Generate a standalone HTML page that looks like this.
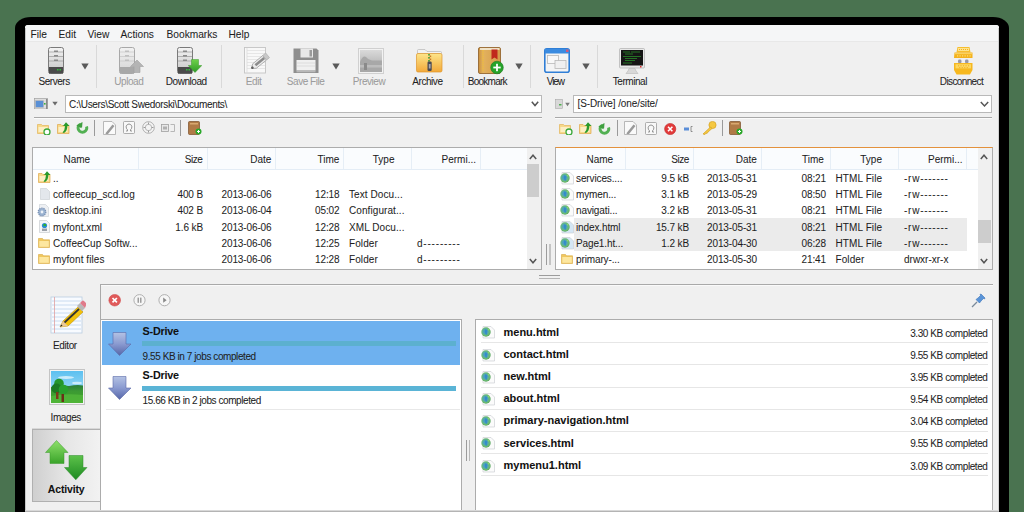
<!DOCTYPE html>
<html><head><meta charset="utf-8">
<style>
*{margin:0;padding:0;box-sizing:border-box}
html,body{width:1024px;height:512px;overflow:hidden;background:#4a7350;font-family:"Liberation Sans",sans-serif;color:#1e1e1e;position:relative}
.a{position:absolute}
.t{position:absolute;white-space:nowrap;-webkit-text-stroke:0.05px currentColor}
</style></head><body>
<div class="a" style="left:15px;top:17px;width:994px;height:520px;background:#000;border-radius:16px/11px"></div>
<div class="a" style="left:25px;top:25px;width:974px;height:500px;background:#f0f0f0;border-radius:3px 3px 0 0"></div>
<div class="a" style="left:25px;top:25px;width:974px;height:16px;background:#f5f6f7;border-radius:3px 3px 0 0"></div>
<div class="a" style="left:25px;top:28px;width:1px;height:490px;background:#c8c8c8"></div>
<div class="a" style="left:998px;top:28px;width:1px;height:490px;background:#d0d0d0"></div>
<div class="a" style="left:26px;top:41px;width:972px;height:1px;background:#e8e8e8"></div>
<div class="t" style="left:30.5px;top:29.87px;font-size:10.2px;line-height:10.2px;letter-spacing:0px;font-weight:normal;color:#1e1e1e;">File</div>
<div class="t" style="left:58.5px;top:29.87px;font-size:10.2px;line-height:10.2px;letter-spacing:0px;font-weight:normal;color:#1e1e1e;">Edit</div>
<div class="t" style="left:87.5px;top:29.87px;font-size:10.2px;line-height:10.2px;letter-spacing:0px;font-weight:normal;color:#1e1e1e;">View</div>
<div class="t" style="left:120.5px;top:29.87px;font-size:10.2px;line-height:10.2px;letter-spacing:0px;font-weight:normal;color:#1e1e1e;">Actions</div>
<div class="t" style="left:166.5px;top:29.87px;font-size:10.2px;line-height:10.2px;letter-spacing:0px;font-weight:normal;color:#1e1e1e;">Bookmarks</div>
<div class="t" style="left:228.5px;top:29.87px;font-size:10.2px;line-height:10.2px;letter-spacing:0px;font-weight:normal;color:#1e1e1e;">Help</div>
<svg class="a" style="left:48px;top:47px" width="16" height="27" viewBox="0 0 16 27"><defs><linearGradient id="sg48" x1="0" y1="0" x2="0" y2="1"><stop offset="0" stop-color="#f4f4f4"/><stop offset="1" stop-color="#c4c4c4"/></linearGradient></defs>
<rect x="0.5" y="0.5" width="15" height="26" rx="2" fill="url(#sg48)" stroke="#7a7a7a"/>
<rect x="1" y="20" width="14" height="6.5" fill="#4a4a4a"/>
<line x1="1" y1="5" x2="15" y2="5" stroke="#8a8a8a" stroke-width="0.6"/>
<line x1="1" y1="9.5" x2="15" y2="9.5" stroke="#8a8a8a" stroke-width="0.6"/>
<line x1="1" y1="14" x2="15" y2="14" stroke="#8a8a8a" stroke-width="0.6"/>
<rect x="6" y="3.5" width="4" height="1.5" fill="#8a8a8a"/>
<rect x="6" y="8" width="4" height="1.5" fill="#8a8a8a"/>
<rect x="6" y="12.5" width="4" height="1.5" fill="#8a8a8a"/>
<rect x="9" y="22" width="1.5" height="1.5" fill="#2fc03a"/><rect x="11.5" y="22" width="1.5" height="1.5" fill="#2fc03a"/></svg>
<svg class="a" style="left:119px;top:47px" width="16" height="27" viewBox="0 0 16 27"><defs><linearGradient id="sg119" x1="0" y1="0" x2="0" y2="1"><stop offset="0" stop-color="#f2f2f2"/><stop offset="1" stop-color="#d4d4d4"/></linearGradient></defs>
<rect x="0.5" y="0.5" width="15" height="26" rx="2" fill="url(#sg119)" stroke="#a8a8a8"/>
<rect x="1" y="20" width="14" height="6.5" fill="#a8a8a8"/>
<line x1="1" y1="5" x2="15" y2="5" stroke="#c0c0c0" stroke-width="0.6"/>
<line x1="1" y1="9.5" x2="15" y2="9.5" stroke="#c0c0c0" stroke-width="0.6"/>
<line x1="1" y1="14" x2="15" y2="14" stroke="#c0c0c0" stroke-width="0.6"/>
<rect x="6" y="3.5" width="4" height="1.5" fill="#c0c0c0"/>
<rect x="6" y="8" width="4" height="1.5" fill="#c0c0c0"/>
<rect x="6" y="12.5" width="4" height="1.5" fill="#c0c0c0"/>
</svg>
<svg class="a" style="left:177px;top:47px" width="16" height="27" viewBox="0 0 16 27"><defs><linearGradient id="sg177" x1="0" y1="0" x2="0" y2="1"><stop offset="0" stop-color="#f4f4f4"/><stop offset="1" stop-color="#c4c4c4"/></linearGradient></defs>
<rect x="0.5" y="0.5" width="15" height="26" rx="2" fill="url(#sg177)" stroke="#7a7a7a"/>
<rect x="1" y="20" width="14" height="6.5" fill="#4a4a4a"/>
<line x1="1" y1="5" x2="15" y2="5" stroke="#8a8a8a" stroke-width="0.6"/>
<line x1="1" y1="9.5" x2="15" y2="9.5" stroke="#8a8a8a" stroke-width="0.6"/>
<line x1="1" y1="14" x2="15" y2="14" stroke="#8a8a8a" stroke-width="0.6"/>
<rect x="6" y="3.5" width="4" height="1.5" fill="#8a8a8a"/>
<rect x="6" y="8" width="4" height="1.5" fill="#8a8a8a"/>
<rect x="6" y="12.5" width="4" height="1.5" fill="#8a8a8a"/>
<rect x="9" y="22" width="1.5" height="1.5" fill="#2fc03a"/><rect x="11.5" y="22" width="1.5" height="1.5" fill="#2fc03a"/></svg>
<svg class="a" style="left:130px;top:59px" width="14" height="14" viewBox="0 0 14 14"><path d="M7 1 L13.5 7.5 L10 7.5 L10 13.5 L4 13.5 L4 7.5 L0.5 7.5 Z" fill="#b4b4b4" stroke="#a0a0a0" stroke-width="0.6"/></svg>
<svg class="a" style="left:188px;top:59px" width="14" height="14" viewBox="0 0 14 14"><defs><linearGradient id="dg" x1="0" y1="0" x2="0" y2="1"><stop offset="0" stop-color="#6fd24a"/><stop offset="1" stop-color="#2e9a26"/></linearGradient></defs><path d="M3.5 0.5 L10.5 0.5 L10.5 6.5 L13.8 6.5 L7 13.5 L0.2 6.5 L3.5 6.5 Z" fill="url(#dg)" stroke="#3a9a2a" stroke-width="0.5"/></svg>
<svg class="a" style="left:81px;top:63px" width="8" height="7" viewBox="0 0 8 7"><path d="M0.3 0.5 L7.7 0.5 L4 6.5 Z" fill="#5a5a5a"/></svg>
<div class="a" style="left:96px;top:45px;width:1px;height:43px;background:#d9d9d9"></div>
<div class="a" style="left:221px;top:45px;width:1px;height:43px;background:#d9d9d9"></div>
<svg class="a" style="left:244px;top:47px" width="27" height="27" viewBox="0 0 27 27"><rect x="0.5" y="0.5" width="21" height="25.5" fill="#f8f8f8" stroke="#c4c4c4" stroke-width="0.9"/>
<g stroke="#dedede" stroke-width="0.7"><line x1="3" y1="3.5" x2="21" y2="3.5"/><line x1="3" y1="6.5" x2="21" y2="6.5"/><line x1="3" y1="9.5" x2="21" y2="9.5"/><line x1="3" y1="12.5" x2="21" y2="12.5"/><line x1="3" y1="15.5" x2="21" y2="15.5"/><line x1="3" y1="18.5" x2="21" y2="18.5"/><line x1="3" y1="21.5" x2="21" y2="21.5"/></g>
<line x1="3" y1="1" x2="3" y2="25.5" stroke="#d8d8d8" stroke-width="0.7"/>
<g transform="translate(7.5,21.5) rotate(-39.3)">
<path d="M0 0 L4 -2.9 L17 -2.9 L17 2.9 L4 2.9 Z" fill="#ececec" stroke="#a4a4a4" stroke-width="0.8"/>
<rect x="5" y="-1.3" width="11.5" height="2.6" fill="#8c8c8c"/>
<rect x="17" y="-3" width="3.8" height="6" fill="#c8c8c8" stroke="#acacac" stroke-width="0.6"/>
<circle cx="1.2" cy="0" r="1.3" fill="#606060"/></g></svg>
<svg class="a" style="left:293px;top:48px" width="26" height="26" viewBox="0 0 26 26"><path d="M0.5 0.5 L23.5 0.5 L25.5 2.5 L25.5 25 L0.5 25 Z" fill="#8e8e8e"/>
<rect x="7.5" y="0.5" width="12.5" height="9" fill="#e8e8e8"/><rect x="16.5" y="2" width="2.5" height="6.5" fill="#9a9a9a"/>
<rect x="3.5" y="12" width="19" height="10.5" fill="#f0f0f0"/>
<g stroke="#d4d4d4" stroke-width="0.7"><line x1="4" y1="15" x2="22" y2="15"/><line x1="4" y1="18" x2="22" y2="18"/></g>
<rect x="3.5" y="22.5" width="19" height="1.8" fill="#b8b8b8"/></svg>
<svg class="a" style="left:332px;top:63px" width="8" height="7" viewBox="0 0 8 7"><path d="M0.3 0.5 L7.7 0.5 L4 6.5 Z" fill="#5a5a5a"/></svg>
<svg class="a" style="left:358px;top:48px" width="26" height="26" viewBox="0 0 26 26"><rect x="0.5" y="0.5" width="25" height="25" fill="#f2f2f2" stroke="#d0d0d0"/>
<defs><linearGradient id="pg" x1="0" y1="0" x2="0" y2="1"><stop offset="0" stop-color="#dadada"/><stop offset="0.45" stop-color="#c2c2c2"/><stop offset="1" stop-color="#bcbcbc"/></linearGradient></defs>
<rect x="2" y="2" width="22" height="22" fill="url(#pg)"/>
<path d="M2 14 Q5 7 8 9 Q10 12 14 12.5 L24 12.5 L24 24 L2 24 Z" fill="#a8a8a8"/><rect x="2" y="17" width="22" height="2.5" fill="#bdbdbd"/><rect x="6" y="15" width="3" height="7" fill="#8a8a8a"/></svg>
<svg class="a" style="left:416px;top:48px" width="27" height="25" viewBox="0 0 27 25"><defs><linearGradient id="ag" x1="0" y1="0" x2="0" y2="1"><stop offset="0" stop-color="#fde58a"/><stop offset="1" stop-color="#f2a93a"/></linearGradient></defs>
<path d="M1.5 5 L1.5 2.5 Q1.5 1.5 2.5 1.5 L9 1.5 L11 3.5 L24.5 3.5 Q25.5 3.5 25.5 4.5 L25.5 5.5 L1.5 5.5 Z" fill="#f2f2f2" stroke="#b8b8b8" stroke-width="0.7"/>
<rect x="0.5" y="5.5" width="25.5" height="18.5" rx="1.5" fill="url(#ag)" stroke="#e0962c" stroke-width="0.7"/>
<g><rect x="12.2" y="6" width="1.6" height="1.6" fill="#3a9a3a"/><rect x="13.6" y="7.5" width="1.6" height="1.6" fill="#c87a2a"/><rect x="12.2" y="9" width="1.6" height="1.6" fill="#3a9a3a"/><rect x="13.6" y="10.5" width="1.6" height="1.6" fill="#c87a2a"/><rect x="12.2" y="12" width="1.6" height="1.6" fill="#3a9a3a"/></g>
<rect x="11.5" y="13.5" width="4.2" height="9.5" rx="1.2" fill="#4a4a52"/><rect x="12.8" y="16" width="1.8" height="4.5" fill="#a8a8b0"/></svg>
<div class="a" style="left:463px;top:45px;width:1px;height:43px;background:#d9d9d9"></div>
<svg class="a" style="left:478px;top:47px" width="27" height="28" viewBox="0 0 27 28"><defs><linearGradient id="bg1" x1="0" y1="0" x2="1" y2="0"><stop offset="0" stop-color="#c98f3e"/><stop offset="0.2" stop-color="#e3b25f"/><stop offset="1" stop-color="#d49b48"/></linearGradient></defs>
<rect x="0.5" y="0.5" width="22" height="26" rx="1.5" fill="url(#bg1)" stroke="#8b5a22" stroke-width="0.8"/>
<rect x="2" y="1.2" width="19.5" height="1.6" fill="#f4f0e4"/><line x1="5" y1="3" x2="5" y2="25" stroke="#f3c030" stroke-width="1" stroke-dasharray="1.2 0.8"/>
<path d="M13.5 2.5 L19.5 2.5 L19.5 12.5 L16.5 10.5 L13.5 12.5 Z" fill="#c0281c"/>
<circle cx="19" cy="20.5" r="6.3" fill="#26a32a" stroke="#1c7a20" stroke-width="0.6"/>
<rect x="15.3" y="19.6" width="7.4" height="1.8" fill="#fff"/><rect x="18.1" y="16.8" width="1.8" height="7.4" fill="#fff"/></svg>
<svg class="a" style="left:515px;top:63px" width="8" height="7" viewBox="0 0 8 7"><path d="M0.3 0.5 L7.7 0.5 L4 6.5 Z" fill="#5a5a5a"/></svg>
<div class="a" style="left:530px;top:45px;width:1px;height:43px;background:#d9d9d9"></div>
<svg class="a" style="left:544px;top:48px" width="26" height="25" viewBox="0 0 26 25"><rect x="0.8" y="0.8" width="24.4" height="23.4" rx="2" fill="#f4f4f4" stroke="#2f7ed6" stroke-width="1.6"/>
<rect x="1" y="1" width="24" height="4.5" fill="#3b8be0"/>
<rect x="22" y="1.5" width="2.5" height="2.5" fill="#d25a7a"/>
<rect x="3.5" y="7.5" width="11" height="8" fill="#f8f8f8" stroke="#b8b8b8" stroke-width="0.8"/>
<rect x="11" y="12.5" width="11" height="8" fill="#f0f0f0" stroke="#b8b8b8" stroke-width="0.8"/></svg>
<svg class="a" style="left:582px;top:63px" width="8" height="7" viewBox="0 0 8 7"><path d="M0.3 0.5 L7.7 0.5 L4 6.5 Z" fill="#5a5a5a"/></svg>
<div class="a" style="left:597px;top:45px;width:1px;height:43px;background:#d9d9d9"></div>
<svg class="a" style="left:619px;top:48px" width="26" height="26" viewBox="0 0 26 26"><rect x="0.5" y="0.5" width="25" height="19.5" rx="1" fill="#e8e8e8" stroke="#b0b0b0" stroke-width="0.7"/>
<rect x="2" y="2" width="22" height="15.5" fill="#151515"/>
<g fill="#2fb02f" opacity="0.6"><rect x="4" y="3.5" width="7" height="1"/><rect x="12" y="3.5" width="9" height="1"/><rect x="6" y="5.5" width="8" height="1"/><rect x="4" y="8" width="18" height="1"/><rect x="6" y="10" width="12" height="1"/><rect x="6" y="12" width="10" height="1"/><rect x="4" y="14.5" width="9" height="1"/></g>
<rect x="21" y="18" width="1.5" height="1.5" fill="#e03030"/>
<path d="M10 20.5 L16 20.5 L17 23 L19 25.5 L7 25.5 L9 23 Z" fill="#d8d8d8" stroke="#b8b8b8" stroke-width="0.6"/></svg>
<svg class="a" style="left:953px;top:46px" width="21" height="29" viewBox="0 0 21 29"><path d="M4.5 1 L16.5 1 L17.5 6.5 L3.5 6.5 Z" fill="#f7be2e"/>
<rect x="5" y="2" width="11" height="3" fill="#fde48e"/>
<g fill="#f5b020"><rect x="6" y="3" width="1" height="1"/><rect x="8" y="3" width="1" height="1"/><rect x="10" y="3" width="1" height="1"/><rect x="12" y="3" width="1" height="1"/><rect x="14" y="3" width="1" height="1"/></g>
<path d="M1.5 6.5 L19.5 6.5 L19.5 12 L1 12 Z" fill="#f4b21c"/>
<rect x="2" y="7" width="17" height="1.2" fill="#fcd25a"/>
<g fill="#fde07a"><rect x="4" y="9.3" width="1.2" height="1.2"/><rect x="6.5" y="9.3" width="1.2" height="1.2"/><rect x="9" y="9.3" width="1.2" height="1.2"/><rect x="11.5" y="9.3" width="1.2" height="1.2"/><rect x="14" y="9.3" width="1.2" height="1.2"/><rect x="16.5" y="9.3" width="1.2" height="1.2"/></g>
<rect x="5" y="13.5" width="3.5" height="3.8" rx="1.4" fill="#9898a8"/><rect x="12" y="13.5" width="3.5" height="3.8" rx="1.4" fill="#9898a8"/>
<path d="M1 17 L19.5 17 L19.5 24 L1 24 Z" fill="#f6b820"/>
<rect x="2.5" y="18.2" width="15.5" height="4.2" fill="#fdd860"/>
<g fill="#f3b02a"><rect x="5" y="19.2" width="1.1" height="1.1"/><rect x="7.5" y="19.2" width="1.1" height="1.1"/><rect x="10" y="19.2" width="1.1" height="1.1"/><rect x="12.5" y="19.2" width="1.1" height="1.1"/><rect x="15" y="19.2" width="1.1" height="1.1"/><rect x="6.2" y="21" width="1.1" height="1.1"/><rect x="8.7" y="21" width="1.1" height="1.1"/><rect x="11.2" y="21" width="1.1" height="1.1"/><rect x="13.7" y="21" width="1.1" height="1.1"/></g>
<path d="M1 24 L19.5 24 L17 28.5 L3.5 28.5 Z" fill="#f7b81e"/></svg>
<div class="t" style="left:38.5px;top:76.83px;font-size:10px;line-height:10px;letter-spacing:-0.45px;font-weight:normal;color:#1e1e1e;">Servers</div>
<div class="t" style="left:114.3px;top:76.83px;font-size:10px;line-height:10px;letter-spacing:-0.45px;font-weight:normal;color:#9c9c9c;">Upload</div>
<div class="t" style="left:165.8px;top:76.83px;font-size:10px;line-height:10px;letter-spacing:-0.45px;font-weight:normal;color:#1e1e1e;">Download</div>
<div class="t" style="left:245.8px;top:76.83px;font-size:10px;line-height:10px;letter-spacing:-0.45px;font-weight:normal;color:#9c9c9c;">Edit</div>
<div class="t" style="left:286.8px;top:76.83px;font-size:10px;line-height:10px;letter-spacing:-0.45px;font-weight:normal;color:#9c9c9c;">Save File</div>
<div class="t" style="left:352.8px;top:76.83px;font-size:10px;line-height:10px;letter-spacing:-0.45px;font-weight:normal;color:#9c9c9c;">Preview</div>
<div class="t" style="left:412.3px;top:76.83px;font-size:10px;line-height:10px;letter-spacing:-0.45px;font-weight:normal;color:#1e1e1e;">Archive</div>
<div class="t" style="left:467.8px;top:76.83px;font-size:10px;line-height:10px;letter-spacing:-0.75px;font-weight:normal;color:#1e1e1e;">Bookmark</div>
<div class="t" style="left:546.8px;top:76.83px;font-size:10px;line-height:10px;letter-spacing:-1.1px;font-weight:normal;color:#1e1e1e;">View</div>
<div class="t" style="left:612.8px;top:76.83px;font-size:10px;line-height:10px;letter-spacing:-0.45px;font-weight:normal;color:#1e1e1e;">Terminal</div>
<div class="t" style="left:939.8px;top:76.83px;font-size:10px;line-height:10px;letter-spacing:-0.62px;font-weight:normal;color:#1e1e1e;">Disconnect</div>
<svg class="a" style="left:34px;top:98px" width="14" height="11" viewBox="0 0 14 11"><rect x="0.5" y="0.5" width="13" height="10.5" fill="#dedede" stroke="#a0a0a0" stroke-width="0.7"/>
<rect x="12" y="1" width="1.5" height="10" fill="#8a8a8a"/>
<rect x="1.5" y="2.7" width="8" height="6.6" fill="#5a90d6" stroke="#b4b4b4" stroke-width="0.6"/>
<rect x="10" y="5" width="1.6" height="1.6" fill="#3cb040"/></svg>
<svg class="a" style="left:52px;top:101px" width="6" height="5" viewBox="0 0 6 5"><path d="M0.3 0.8 L5.7 0.8 L3 4.5 Z" fill="#6a6a6a"/></svg>
<div class="a" style="left:65px;top:95px;width:477px;height:18px;background:#fff;border:1px solid #b9b9b9"></div>
<div class="t" style="left:69px;top:99.53px;font-size:10px;line-height:10px;letter-spacing:-0.33px;font-weight:normal;color:#1e1e1e;">C:\Users\Scott Swedorski\Documents\</div>
<svg class="a" style="left:531px;top:101px" width="8" height="6" viewBox="0 0 8 6"><path d="M0.8 0.8 L4 4.5 L7.2 0.8" fill="none" stroke="#555" stroke-width="1.5"/></svg>
<svg class="a" style="left:555px;top:99px" width="9" height="10" viewBox="0 0 9 10"><rect x="0.5" y="0.5" width="7" height="9" fill="#d8d8d8" stroke="#a8a8a8" stroke-width="0.6"/><rect x="4" y="5" width="2.5" height="1.5" fill="#50b050"/></svg>
<svg class="a" style="left:565px;top:102px" width="5" height="5" viewBox="0 0 5 5"><path d="M0.2 0.8 L4.8 0.8 L2.5 4.2 Z" fill="#7a7a7a"/></svg>
<div class="a" style="left:573px;top:95px;width:419px;height:18px;background:#fff;border:1px solid #b9b9b9"></div>
<div class="t" style="left:577.5px;top:99.03px;font-size:10px;line-height:10px;letter-spacing:-0.1px;font-weight:normal;color:#1e1e1e;">[S-Drive] /one/site/</div>
<svg class="a" style="left:980px;top:101px" width="9" height="7" viewBox="0 0 9 7"><path d="M0.8 1 L4.5 5 L8.2 1" fill="none" stroke="#555" stroke-width="1.5"/></svg>
<div class="a" style="left:34px;top:117px;width:508px;height:1px;background:#a8a8a8"></div>
<div class="a" style="left:34px;top:118px;width:508px;height:1px;background:#fbfbfb"></div>
<div class="a" style="left:555px;top:117px;width:437px;height:1px;background:#a8a8a8"></div>
<div class="a" style="left:555px;top:118px;width:437px;height:1px;background:#fbfbfb"></div>
<svg class="a" style="left:37px;top:123px" width="14" height="12" viewBox="0 0 14 12"><path d="M0.5 1.5 L4.5 1.5 L5.5 2.5 L11.5 2.5 L11.5 10.5 L0.5 10.5 Z" fill="#f7d98a" stroke="#e2b45a" stroke-width="0.7"/>
<rect x="1.5" y="4" width="9" height="5" fill="#fcefc4"/>
<circle cx="10" cy="9" r="3" fill="#fff" stroke="#3aa83a" stroke-width="1.3"/></svg>
<svg class="a" style="left:57px;top:122px" width="13" height="12" viewBox="0 0 13 12"><path d="M0.5 2.5 L4 2.5 L5 3.5 L12 3.5 L12 11.5 L0.5 11.5 Z" fill="#f7d98a" stroke="#e0a84a" stroke-width="0.7"/>
<rect x="1.5" y="5" width="9" height="5" fill="#fcefc4"/>
<path d="M5.5 10.5 Q8 8 8 4 L6 4 L9 0.3 L12.5 4 L10.3 4 Q10.5 9 7 11 Z" fill="#2a9a2a"/></svg>
<svg class="a" style="left:76px;top:122px" width="13" height="12" viewBox="0 0 13 12"><path d="M4.2 2.2 A4.3 4.3 0 1 0 10.5 4.5" fill="none" stroke="#52b052" stroke-width="3"/>
<path d="M0.3 3.6 L6.5 0 L6 6.5 Z" fill="#3f9f3f"/><circle cx="6.5" cy="6.5" r="1.6" fill="#e8f4e8" opacity="0.8"/></svg>
<div class="a" style="left:94px;top:120px;width:1px;height:16px;background:#9a9a9a"></div>
<svg class="a" style="left:103px;top:121px" width="13" height="14" viewBox="0 0 13 14"><path d="M0.5 0.5 L9 0.5 L12.5 4 L12.5 13.5 L0.5 13.5 Z" fill="#fafafa" stroke="#a8a8a8" stroke-width="0.8"/>
<path d="M3 11.5 L9.5 3.5 L11.5 5 L5 13 L2.5 13 Z" fill="#9a9a9a"/></svg>
<svg class="a" style="left:123px;top:121px" width="12" height="13" viewBox="0 0 12 13"><rect x="0.5" y="0.5" width="11" height="12" rx="1" fill="#f8f8f8" stroke="#9a9a9a" stroke-width="0.8"/>
<path d="M3 10 L4.5 10 L4.5 8.8 Q2.8 7.5 3.2 5.2 Q4 3 6 3 Q8 3 8.8 5.2 Q9.2 7.5 7.5 8.8 L7.5 10 L9 10" fill="none" stroke="#888" stroke-width="0.9"/></svg>
<svg class="a" style="left:142px;top:121px" width="13" height="13" viewBox="0 0 13 13"><circle cx="6.5" cy="6.5" r="5.8" fill="#f4f4f4" stroke="#a0a0a0" stroke-width="0.8"/>
<circle cx="6.5" cy="6.5" r="3.2" fill="none" stroke="#a8a8a8" stroke-width="0.8"/>
<g fill="#999"><rect x="6" y="1.5" width="1" height="2"/><rect x="6" y="9.5" width="1" height="2"/><rect x="1.5" y="6" width="2" height="1"/><rect x="9.5" y="6" width="2" height="1"/></g></svg>
<svg class="a" style="left:161px;top:124px" width="14" height="8" viewBox="0 0 14 8"><rect x="0.5" y="0.5" width="7" height="7" fill="#e8e8e8" stroke="#a0a0a0" stroke-width="0.8"/>
<rect x="2" y="2.5" width="4" height="3" fill="#b0b0b0"/>
<path d="M9.5 0.5 L13.5 0.5 L13.5 7.5 L9.5 7.5" fill="none" stroke="#a8a8a8" stroke-width="0.8"/></svg>
<div class="a" style="left:180px;top:120px;width:1px;height:16px;background:#9a9a9a"></div>
<svg class="a" style="left:188px;top:121px" width="14" height="14" viewBox="0 0 14 14"><rect x="0.5" y="0.5" width="11" height="13" rx="1" fill="#b07a46" stroke="#7a4e28" stroke-width="0.7"/>
<rect x="2" y="2" width="8" height="1.5" fill="#d8a870"/>
<circle cx="10.5" cy="10.5" r="3" fill="#2aa82a"/><rect x="9" y="10" width="3" height="1" fill="#fff"/><rect x="10" y="9" width="1" height="3" fill="#fff"/></svg>
<svg class="a" style="left:559px;top:123px" width="14" height="12" viewBox="0 0 14 12"><path d="M0.5 1.5 L4.5 1.5 L5.5 2.5 L11.5 2.5 L11.5 10.5 L0.5 10.5 Z" fill="#f7d98a" stroke="#e2b45a" stroke-width="0.7"/>
<rect x="1.5" y="4" width="9" height="5" fill="#fcefc4"/>
<circle cx="10" cy="9" r="3" fill="#fff" stroke="#3aa83a" stroke-width="1.3"/></svg>
<svg class="a" style="left:579px;top:122px" width="13" height="12" viewBox="0 0 13 12"><path d="M0.5 2.5 L4 2.5 L5 3.5 L12 3.5 L12 11.5 L0.5 11.5 Z" fill="#f7d98a" stroke="#e0a84a" stroke-width="0.7"/>
<rect x="1.5" y="5" width="9" height="5" fill="#fcefc4"/>
<path d="M5.5 10.5 Q8 8 8 4 L6 4 L9 0.3 L12.5 4 L10.3 4 Q10.5 9 7 11 Z" fill="#2a9a2a"/></svg>
<svg class="a" style="left:598px;top:123px" width="13" height="12" viewBox="0 0 13 12"><path d="M4.2 2.2 A4.3 4.3 0 1 0 10.5 4.5" fill="none" stroke="#52b052" stroke-width="3"/>
<path d="M0.3 3.6 L6.5 0 L6 6.5 Z" fill="#3f9f3f"/><circle cx="6.5" cy="6.5" r="1.6" fill="#e8f4e8" opacity="0.8"/></svg>
<div class="a" style="left:617px;top:120px;width:1px;height:16px;background:#9a9a9a"></div>
<svg class="a" style="left:624px;top:121px" width="13" height="14" viewBox="0 0 13 14"><path d="M0.5 0.5 L9 0.5 L12.5 4 L12.5 13.5 L0.5 13.5 Z" fill="#fafafa" stroke="#a8a8a8" stroke-width="0.8"/>
<path d="M3 11.5 L9.5 3.5 L11.5 5 L5 13 L2.5 13 Z" fill="#9a9a9a"/></svg>
<svg class="a" style="left:645px;top:122px" width="12" height="13" viewBox="0 0 12 13"><rect x="0.5" y="0.5" width="11" height="12" rx="1" fill="#f8f8f8" stroke="#9a9a9a" stroke-width="0.8"/>
<path d="M3 10 L4.5 10 L4.5 8.8 Q2.8 7.5 3.2 5.2 Q4 3 6 3 Q8 3 8.8 5.2 Q9.2 7.5 7.5 8.8 L7.5 10 L9 10" fill="none" stroke="#888" stroke-width="0.9"/></svg>
<svg class="a" style="left:664px;top:123px" width="13" height="12" viewBox="0 0 13 12"><circle cx="6.2" cy="6" r="5.6" fill="#e23a3a" stroke="#c02828" stroke-width="0.6"/><path d="M4 3.8 L8.4 8.2 M8.4 3.8 L4 8.2" stroke="#fff" stroke-width="1.6"/></svg>
<svg class="a" style="left:684px;top:126px" width="9" height="6" viewBox="0 0 9 6"><rect x="0" y="1.5" width="5" height="3" fill="#5a8ed8"/><path d="M8.5 0.5 L7 0.5 L7 5.5 L8.5 5.5" fill="none" stroke="#777" stroke-width="0.8"/></svg>
<svg class="a" style="left:702px;top:121px" width="15" height="14" viewBox="0 0 15 14"><circle cx="10.5" cy="4" r="3.6" fill="#f5c842" stroke="#d4a020" stroke-width="0.7"/><path d="M8.5 6 L1 13 L3 13.5 L4 12 L5 12.5 L6 11 L10 7.5 Z" fill="#f5c842" stroke="#d4a020" stroke-width="0.7"/></svg>
<div class="a" style="left:722px;top:120px;width:1px;height:16px;background:#9a9a9a"></div>
<svg class="a" style="left:729px;top:121px" width="14" height="14" viewBox="0 0 14 14"><rect x="0.5" y="0.5" width="11" height="13" rx="1" fill="#b07a46" stroke="#7a4e28" stroke-width="0.7"/>
<rect x="2" y="2" width="8" height="1.5" fill="#d8a870"/>
<circle cx="10.5" cy="10.5" r="3" fill="#2aa82a"/><rect x="9" y="10" width="3" height="1" fill="#fff"/><rect x="10" y="9" width="1" height="3" fill="#fff"/></svg>
<div class="a" style="left:32px;top:147px;width:510px;height:123px;background:#fff;border:1px solid #acacac"></div>
<div class="a" style="left:33px;top:148px;width:494px;height:21px;background:#fafcfe"></div>
<div class="a" style="left:33px;top:169px;width:494px;height:1px;background:#e4edf6"></div>
<div class="a" style="left:138px;top:148px;width:1px;height:21px;background:#e6eef6"></div>
<div class="a" style="left:207px;top:148px;width:1px;height:21px;background:#e6eef6"></div>
<div class="a" style="left:275px;top:148px;width:1px;height:21px;background:#e6eef6"></div>
<div class="a" style="left:343px;top:148px;width:1px;height:21px;background:#e6eef6"></div>
<div class="a" style="left:411px;top:148px;width:1px;height:21px;background:#e6eef6"></div>
<div class="a" style="left:480px;top:148px;width:1px;height:21px;background:#e6eef6"></div>
<div class="a" style="left:527px;top:148px;width:14px;height:121px;background:#f0f0f0"></div>
<svg class="a" style="left:529px;top:154px" width="8" height="6" viewBox="0 0 8 6"><path d="M0.8 5 L4 1.2 L7.2 5" fill="none" stroke="#555" stroke-width="1.5"/></svg>
<div class="a" style="left:527px;top:164px;width:12px;height:33px;background:#cdcdcd"></div>
<svg class="a" style="left:529px;top:258px" width="8" height="6" viewBox="0 0 8 6"><path d="M0.8 1 L4 4.8 L7.2 1" fill="none" stroke="#555" stroke-width="1.5"/></svg>
<div class="t" style="left:63.5px;top:155.23px;font-size:10px;line-height:10px;letter-spacing:0px;font-weight:normal;color:#1e1e1e;">Name</div>
<div class="t" style="right:821.5px;top:155.23px;font-size:10px;line-height:10px;letter-spacing:-0.4px;color:#1e1e1e">Size</div>
<div class="t" style="right:752.7px;top:155.23px;font-size:10px;line-height:10px;letter-spacing:0px;color:#1e1e1e">Date</div>
<div class="t" style="right:684.7px;top:155.23px;font-size:10px;line-height:10px;letter-spacing:0px;color:#1e1e1e">Time</div>
<div class="t" style="left:372.8px;top:155.23px;font-size:10px;line-height:10px;letter-spacing:0px;font-weight:normal;color:#1e1e1e;">Type</div>
<div class="t" style="right:548px;top:155.23px;font-size:10px;line-height:10px;letter-spacing:0px;color:#1e1e1e">Permi...</div>
<svg class="a" style="left:38px;top:171px" width="13" height="12" viewBox="0 0 13 12"><path d="M0.5 2.5 L4 2.5 L5 3.5 L12 3.5 L12 11.5 L0.5 11.5 Z" fill="#f7d98a" stroke="#e0a84a" stroke-width="0.7"/>
<rect x="1.5" y="5" width="9" height="5" fill="#fcefc4"/>
<path d="M5.5 10.5 Q8 8 8 4 L6 4 L9 0.3 L12.5 4 L10.3 4 Q10.5 9 7 11 Z" fill="#2a9a2a"/></svg>
<div class="t" style="left:53px;top:173.53px;font-size:10px;line-height:10px;letter-spacing:0.08px;font-weight:normal;color:#1e1e1e;">..</div>
<div class="t" style="left:53px;top:189.53px;font-size:10px;line-height:10px;letter-spacing:0.08px;font-weight:normal;color:#1e1e1e;">coffeecup_scd.log</div>
<div class="t" style="right:821px;top:189.53px;font-size:10px;line-height:10px;letter-spacing:-0.12px;color:#1e1e1e">400 B</div>
<div class="t" style="right:752.5px;top:189.53px;font-size:10px;line-height:10px;letter-spacing:-0.12px;color:#1e1e1e">2013-06-06</div>
<div class="t" style="right:684.5px;top:189.53px;font-size:10px;line-height:10px;letter-spacing:-0.12px;color:#1e1e1e">12:18</div>
<div class="t" style="left:349px;top:189.53px;font-size:10px;line-height:10px;letter-spacing:0.08px;font-weight:normal;color:#1e1e1e;">Text Docu...</div>
<div class="t" style="left:53px;top:205.53px;font-size:10px;line-height:10px;letter-spacing:0.08px;font-weight:normal;color:#1e1e1e;">desktop.ini</div>
<div class="t" style="right:821px;top:205.53px;font-size:10px;line-height:10px;letter-spacing:-0.12px;color:#1e1e1e">402 B</div>
<div class="t" style="right:752.5px;top:205.53px;font-size:10px;line-height:10px;letter-spacing:-0.12px;color:#1e1e1e">2013-06-04</div>
<div class="t" style="right:684.5px;top:205.53px;font-size:10px;line-height:10px;letter-spacing:-0.12px;color:#1e1e1e">05:02</div>
<div class="t" style="left:349px;top:205.53px;font-size:10px;line-height:10px;letter-spacing:0.08px;font-weight:normal;color:#1e1e1e;">Configurat...</div>
<div class="t" style="left:53px;top:222.53px;font-size:10px;line-height:10px;letter-spacing:0.08px;font-weight:normal;color:#1e1e1e;">myfont.xml</div>
<div class="t" style="right:821px;top:222.53px;font-size:10px;line-height:10px;letter-spacing:-0.12px;color:#1e1e1e">1.6 kB</div>
<div class="t" style="right:752.5px;top:222.53px;font-size:10px;line-height:10px;letter-spacing:-0.12px;color:#1e1e1e">2013-06-06</div>
<div class="t" style="right:684.5px;top:222.53px;font-size:10px;line-height:10px;letter-spacing:-0.12px;color:#1e1e1e">12:28</div>
<div class="t" style="left:349px;top:222.53px;font-size:10px;line-height:10px;letter-spacing:0.08px;font-weight:normal;color:#1e1e1e;">XML Docu...</div>
<div class="t" style="left:53px;top:238.53px;font-size:10px;line-height:10px;letter-spacing:0.08px;font-weight:normal;color:#1e1e1e;">CoffeeCup Softw...</div>
<div class="t" style="right:752.5px;top:238.53px;font-size:10px;line-height:10px;letter-spacing:-0.12px;color:#1e1e1e">2013-06-06</div>
<div class="t" style="right:684.5px;top:238.53px;font-size:10px;line-height:10px;letter-spacing:-0.12px;color:#1e1e1e">12:25</div>
<div class="t" style="left:349px;top:238.53px;font-size:10px;line-height:10px;letter-spacing:0.08px;font-weight:normal;color:#1e1e1e;">Folder</div>
<div class="t" style="left:417px;top:238.53px;font-size:10px;line-height:10px;letter-spacing:0.8px;font-weight:normal;color:#1e1e1e;">d---------</div>
<div class="t" style="left:53px;top:254.53px;font-size:10px;line-height:10px;letter-spacing:0.08px;font-weight:normal;color:#1e1e1e;">myfont files</div>
<div class="t" style="right:752.5px;top:254.53px;font-size:10px;line-height:10px;letter-spacing:-0.12px;color:#1e1e1e">2013-06-06</div>
<div class="t" style="right:684.5px;top:254.53px;font-size:10px;line-height:10px;letter-spacing:-0.12px;color:#1e1e1e">12:28</div>
<div class="t" style="left:349px;top:254.53px;font-size:10px;line-height:10px;letter-spacing:0.08px;font-weight:normal;color:#1e1e1e;">Folder</div>
<div class="t" style="left:417px;top:254.53px;font-size:10px;line-height:10px;letter-spacing:0.8px;font-weight:normal;color:#1e1e1e;">d---------</div>
<svg class="a" style="left:40px;top:188px" width="10" height="12" viewBox="0 0 10 12"><path d="M0.5 0.5 L6.5 0.5 L9.5 3.5 L9.5 11.5 L0.5 11.5 Z" fill="#e3e7ec" stroke="#c8ccd2" stroke-width="0.6"/></svg>
<svg class="a" style="left:37px;top:204px" width="12" height="13" viewBox="0 0 12 13"><path d="M2.5 0.5 L8.5 0.5 L11.5 3.5 L11.5 12.5 L2.5 12.5 Z" fill="#eef0f3" stroke="#c8ccd2" stroke-width="0.6"/>
<circle cx="5" cy="8" r="3.8" fill="#9ab2d0" stroke="#7890b4" stroke-width="1.3" stroke-dasharray="1.2 0.9"/><circle cx="5" cy="8" r="1.4" fill="#eef2f8"/></svg>
<svg class="a" style="left:39px;top:220px" width="11" height="13" viewBox="0 0 11 13"><path d="M0.5 0.5 L7.5 0.5 L10.5 3.5 L10.5 12.5 L0.5 12.5 Z" fill="#f4f5f7" stroke="#c0c4ca" stroke-width="0.6"/>
<circle cx="5.5" cy="5.5" r="2.6" fill="#2a8ad0"/><rect x="4.5" y="4" width="2.5" height="2" fill="#30b030"/>
<rect x="3" y="8.5" width="5" height="2.5" fill="#9aa0a8"/></svg>
<svg class="a" style="left:38px;top:238px" width="12" height="10" viewBox="0 0 12 10"><path d="M0.5 0.5 L4.5 0.5 L5.5 1.8 L11.5 1.8 L11.5 9.5 L0.5 9.5 Z" fill="#f0c860" stroke="#d9a840" stroke-width="0.6"/>
<rect x="1.3" y="3" width="9.5" height="5.8" fill="#fde7a0"/></svg>
<svg class="a" style="left:38px;top:254px" width="12" height="10" viewBox="0 0 12 10"><path d="M0.5 0.5 L4.5 0.5 L5.5 1.8 L11.5 1.8 L11.5 9.5 L0.5 9.5 Z" fill="#f0c860" stroke="#d9a840" stroke-width="0.6"/>
<rect x="1.3" y="3" width="9.5" height="5.8" fill="#fde7a0"/></svg>
<div class="a" style="left:555px;top:147px;width:438px;height:123px;background:#fff;border:1px solid #acacac;border-top:1px solid #e3913c"></div>
<div class="a" style="left:556px;top:148px;width:422px;height:21px;background:#fafcfe"></div>
<div class="a" style="left:556px;top:169px;width:422px;height:1px;background:#e4edf6"></div>
<div class="a" style="left:625px;top:148px;width:1px;height:21px;background:#e6eef6"></div>
<div class="a" style="left:693px;top:148px;width:1px;height:21px;background:#e6eef6"></div>
<div class="a" style="left:761px;top:148px;width:1px;height:21px;background:#e6eef6"></div>
<div class="a" style="left:830px;top:148px;width:1px;height:21px;background:#e6eef6"></div>
<div class="a" style="left:898px;top:148px;width:1px;height:21px;background:#e6eef6"></div>
<div class="a" style="left:966px;top:148px;width:1px;height:21px;background:#e6eef6"></div>
<div class="a" style="left:978px;top:148px;width:14px;height:121px;background:#f0f0f0"></div>
<svg class="a" style="left:980px;top:154px" width="8" height="6" viewBox="0 0 8 6"><path d="M0.8 5 L4 1.2 L7.2 5" fill="none" stroke="#555" stroke-width="1.5"/></svg>
<div class="a" style="left:978px;top:220px;width:13px;height:23px;background:#cdcdcd"></div>
<svg class="a" style="left:980px;top:258px" width="8" height="6" viewBox="0 0 8 6"><path d="M0.8 1 L4 4.8 L7.2 1" fill="none" stroke="#555" stroke-width="1.5"/></svg>
<div class="t" style="left:586.5px;top:155.23px;font-size:10px;line-height:10px;letter-spacing:0px;font-weight:normal;color:#1e1e1e;">Name</div>
<div class="t" style="right:335px;top:155.23px;font-size:10px;line-height:10px;letter-spacing:-0.4px;color:#1e1e1e">Size</div>
<div class="t" style="right:267.20000000000005px;top:155.23px;font-size:10px;line-height:10px;letter-spacing:0px;color:#1e1e1e">Date</div>
<div class="t" style="left:802px;top:155.23px;font-size:10px;line-height:10px;letter-spacing:0px;font-weight:normal;color:#1e1e1e;">Time</div>
<div class="t" style="left:860.3px;top:155.23px;font-size:10px;line-height:10px;letter-spacing:0px;font-weight:normal;color:#1e1e1e;">Type</div>
<div class="t" style="right:61.5px;top:155.23px;font-size:10px;line-height:10px;letter-spacing:0px;color:#1e1e1e">Permi...</div>
<div class="a" style="left:574px;top:218px;width:393px;height:33px;background:#ebebeb"></div>
<div class="t" style="left:576px;top:173.53px;font-size:10px;line-height:10px;letter-spacing:-0.12px;font-weight:normal;color:#1e1e1e;">services....</div>
<div class="t" style="right:335px;top:173.53px;font-size:10px;line-height:10px;letter-spacing:-0.12px;color:#1e1e1e">9.5 kB</div>
<div class="t" style="right:267px;top:173.53px;font-size:10px;line-height:10px;letter-spacing:-0.12px;color:#1e1e1e">2013-05-31</div>
<div class="t" style="left:801.5px;top:173.53px;font-size:10px;line-height:10px;letter-spacing:-0.12px;font-weight:normal;color:#1e1e1e;">08:21</div>
<div class="t" style="left:835.5px;top:173.53px;font-size:10px;line-height:10px;letter-spacing:0.1px;font-weight:normal;color:#1e1e1e;">HTML File</div>
<div class="t" style="left:904px;top:173.53px;font-size:10px;line-height:10px;letter-spacing:0.75px;font-weight:normal;color:#1e1e1e;">-rw-------</div>
<svg class="a" style="left:560px;top:172px" width="14" height="13" viewBox="0 0 14 13"><defs><radialGradient id="gl" cx="0.45" cy="0.45" r="0.55"><stop offset="0" stop-color="#3f96d0"/><stop offset="0.45" stop-color="#52a8b0"/><stop offset="0.75" stop-color="#6cbc74"/><stop offset="1" stop-color="#5aa860"/></radialGradient></defs>
<path d="M2 0.5 L10 0.5 L13.5 4 L13.5 12 L2 12 Z" fill="#fbfbfb" stroke="#cdd0d4" stroke-width="0.7"/>
<circle cx="5" cy="6" r="4.7" fill="url(#gl)"/><path d="M4 3.5 Q6 3 6.3 5 Q5.3 6.3 6.3 8.3 L5 9 Q3.5 7 4 3.5 Z" fill="#2f86d0" opacity="0.75"/><circle cx="7.6" cy="3.6" r="0.9" fill="#8ad86a"/></svg>
<div class="t" style="left:576px;top:189.53px;font-size:10px;line-height:10px;letter-spacing:-0.12px;font-weight:normal;color:#1e1e1e;">mymen...</div>
<div class="t" style="right:335px;top:189.53px;font-size:10px;line-height:10px;letter-spacing:-0.12px;color:#1e1e1e">3.1 kB</div>
<div class="t" style="right:267px;top:189.53px;font-size:10px;line-height:10px;letter-spacing:-0.12px;color:#1e1e1e">2013-05-29</div>
<div class="t" style="left:801.5px;top:189.53px;font-size:10px;line-height:10px;letter-spacing:-0.12px;font-weight:normal;color:#1e1e1e;">08:50</div>
<div class="t" style="left:835.5px;top:189.53px;font-size:10px;line-height:10px;letter-spacing:0.1px;font-weight:normal;color:#1e1e1e;">HTML File</div>
<div class="t" style="left:904px;top:189.53px;font-size:10px;line-height:10px;letter-spacing:0.75px;font-weight:normal;color:#1e1e1e;">-rw-------</div>
<svg class="a" style="left:560px;top:188px" width="14" height="13" viewBox="0 0 14 13"><defs><radialGradient id="gl" cx="0.45" cy="0.45" r="0.55"><stop offset="0" stop-color="#3f96d0"/><stop offset="0.45" stop-color="#52a8b0"/><stop offset="0.75" stop-color="#6cbc74"/><stop offset="1" stop-color="#5aa860"/></radialGradient></defs>
<path d="M2 0.5 L10 0.5 L13.5 4 L13.5 12 L2 12 Z" fill="#fbfbfb" stroke="#cdd0d4" stroke-width="0.7"/>
<circle cx="5" cy="6" r="4.7" fill="url(#gl)"/><path d="M4 3.5 Q6 3 6.3 5 Q5.3 6.3 6.3 8.3 L5 9 Q3.5 7 4 3.5 Z" fill="#2f86d0" opacity="0.75"/><circle cx="7.6" cy="3.6" r="0.9" fill="#8ad86a"/></svg>
<div class="t" style="left:576px;top:205.53px;font-size:10px;line-height:10px;letter-spacing:-0.12px;font-weight:normal;color:#1e1e1e;">navigati...</div>
<div class="t" style="right:335px;top:205.53px;font-size:10px;line-height:10px;letter-spacing:-0.12px;color:#1e1e1e">3.2 kB</div>
<div class="t" style="right:267px;top:205.53px;font-size:10px;line-height:10px;letter-spacing:-0.12px;color:#1e1e1e">2013-05-31</div>
<div class="t" style="left:801.5px;top:205.53px;font-size:10px;line-height:10px;letter-spacing:-0.12px;font-weight:normal;color:#1e1e1e;">08:21</div>
<div class="t" style="left:835.5px;top:205.53px;font-size:10px;line-height:10px;letter-spacing:0.1px;font-weight:normal;color:#1e1e1e;">HTML File</div>
<div class="t" style="left:904px;top:205.53px;font-size:10px;line-height:10px;letter-spacing:0.75px;font-weight:normal;color:#1e1e1e;">-rw-------</div>
<svg class="a" style="left:560px;top:204px" width="14" height="13" viewBox="0 0 14 13"><defs><radialGradient id="gl" cx="0.45" cy="0.45" r="0.55"><stop offset="0" stop-color="#3f96d0"/><stop offset="0.45" stop-color="#52a8b0"/><stop offset="0.75" stop-color="#6cbc74"/><stop offset="1" stop-color="#5aa860"/></radialGradient></defs>
<path d="M2 0.5 L10 0.5 L13.5 4 L13.5 12 L2 12 Z" fill="#fbfbfb" stroke="#cdd0d4" stroke-width="0.7"/>
<circle cx="5" cy="6" r="4.7" fill="url(#gl)"/><path d="M4 3.5 Q6 3 6.3 5 Q5.3 6.3 6.3 8.3 L5 9 Q3.5 7 4 3.5 Z" fill="#2f86d0" opacity="0.75"/><circle cx="7.6" cy="3.6" r="0.9" fill="#8ad86a"/></svg>
<div class="t" style="left:576px;top:222.53px;font-size:10px;line-height:10px;letter-spacing:-0.12px;font-weight:normal;color:#1e1e1e;">index.html</div>
<div class="t" style="right:335px;top:222.53px;font-size:10px;line-height:10px;letter-spacing:-0.12px;color:#1e1e1e">15.7 kB</div>
<div class="t" style="right:267px;top:222.53px;font-size:10px;line-height:10px;letter-spacing:-0.12px;color:#1e1e1e">2013-05-31</div>
<div class="t" style="left:801.5px;top:222.53px;font-size:10px;line-height:10px;letter-spacing:-0.12px;font-weight:normal;color:#1e1e1e;">08:21</div>
<div class="t" style="left:835.5px;top:222.53px;font-size:10px;line-height:10px;letter-spacing:0.1px;font-weight:normal;color:#1e1e1e;">HTML File</div>
<div class="t" style="left:904px;top:222.53px;font-size:10px;line-height:10px;letter-spacing:0.75px;font-weight:normal;color:#1e1e1e;">-rw-------</div>
<svg class="a" style="left:560px;top:221px" width="14" height="13" viewBox="0 0 14 13"><defs><radialGradient id="gl" cx="0.45" cy="0.45" r="0.55"><stop offset="0" stop-color="#3f96d0"/><stop offset="0.45" stop-color="#52a8b0"/><stop offset="0.75" stop-color="#6cbc74"/><stop offset="1" stop-color="#5aa860"/></radialGradient></defs>
<path d="M2 0.5 L10 0.5 L13.5 4 L13.5 12 L2 12 Z" fill="#d4e6f4" stroke="#cdd0d4" stroke-width="0.7"/>
<circle cx="5" cy="6" r="4.7" fill="url(#gl)"/><path d="M4 3.5 Q6 3 6.3 5 Q5.3 6.3 6.3 8.3 L5 9 Q3.5 7 4 3.5 Z" fill="#2f86d0" opacity="0.75"/><circle cx="7.6" cy="3.6" r="0.9" fill="#8ad86a"/></svg>
<div class="t" style="left:576px;top:238.53px;font-size:10px;line-height:10px;letter-spacing:-0.12px;font-weight:normal;color:#1e1e1e;">Page1.ht...</div>
<div class="t" style="right:335px;top:238.53px;font-size:10px;line-height:10px;letter-spacing:-0.12px;color:#1e1e1e">1.2 kB</div>
<div class="t" style="right:267px;top:238.53px;font-size:10px;line-height:10px;letter-spacing:-0.12px;color:#1e1e1e">2013-04-30</div>
<div class="t" style="left:801.5px;top:238.53px;font-size:10px;line-height:10px;letter-spacing:-0.12px;font-weight:normal;color:#1e1e1e;">06:28</div>
<div class="t" style="left:835.5px;top:238.53px;font-size:10px;line-height:10px;letter-spacing:0.1px;font-weight:normal;color:#1e1e1e;">HTML File</div>
<div class="t" style="left:904px;top:238.53px;font-size:10px;line-height:10px;letter-spacing:0.75px;font-weight:normal;color:#1e1e1e;">-rw-------</div>
<svg class="a" style="left:560px;top:237px" width="14" height="13" viewBox="0 0 14 13"><defs><radialGradient id="gl" cx="0.45" cy="0.45" r="0.55"><stop offset="0" stop-color="#3f96d0"/><stop offset="0.45" stop-color="#52a8b0"/><stop offset="0.75" stop-color="#6cbc74"/><stop offset="1" stop-color="#5aa860"/></radialGradient></defs>
<path d="M2 0.5 L10 0.5 L13.5 4 L13.5 12 L2 12 Z" fill="#d4e6f4" stroke="#cdd0d4" stroke-width="0.7"/>
<circle cx="5" cy="6" r="4.7" fill="url(#gl)"/><path d="M4 3.5 Q6 3 6.3 5 Q5.3 6.3 6.3 8.3 L5 9 Q3.5 7 4 3.5 Z" fill="#2f86d0" opacity="0.75"/><circle cx="7.6" cy="3.6" r="0.9" fill="#8ad86a"/></svg>
<div class="t" style="left:576px;top:254.53px;font-size:10px;line-height:10px;letter-spacing:-0.12px;font-weight:normal;color:#1e1e1e;">primary-...</div>
<div class="t" style="right:267px;top:254.53px;font-size:10px;line-height:10px;letter-spacing:-0.12px;color:#1e1e1e">2013-05-30</div>
<div class="t" style="left:801.5px;top:254.53px;font-size:10px;line-height:10px;letter-spacing:-0.12px;font-weight:normal;color:#1e1e1e;">21:41</div>
<div class="t" style="left:835.5px;top:254.53px;font-size:10px;line-height:10px;letter-spacing:0.1px;font-weight:normal;color:#1e1e1e;">Folder</div>
<div class="t" style="left:904px;top:254.53px;font-size:10px;line-height:10px;letter-spacing:0px;font-weight:normal;color:#1e1e1e;">drwxr-xr-x</div>
<svg class="a" style="left:561px;top:254px" width="12" height="10" viewBox="0 0 12 10"><path d="M0.5 0.5 L4.5 0.5 L5.5 1.8 L11.5 1.8 L11.5 9.5 L0.5 9.5 Z" fill="#f0c860" stroke="#d9a840" stroke-width="0.6"/>
<rect x="1.3" y="3" width="9.5" height="5.8" fill="#fde7a0"/></svg>
<div class="a" style="left:546px;top:244px;width:1px;height:21px;background:#9c9c9c"></div>
<div class="a" style="left:549px;top:244px;width:2px;height:21px;background:#c4c4c4"></div>
<div class="a" style="left:539px;top:275px;width:21px;height:1px;background:#9c9c9c"></div>
<div class="a" style="left:539px;top:278px;width:21px;height:1px;background:#b4b4b4"></div>
<div class="a" style="left:100px;top:284px;width:893px;height:1px;background:#a9a9a9"></div>
<div class="a" style="left:100px;top:284px;width:1px;height:240px;background:#a9a9a9"></div>
<div class="a" style="left:101px;top:285px;width:892px;height:1px;background:#fafafa"></div>
<svg class="a" style="left:108px;top:294px" width="14" height="13" viewBox="0 0 14 13"><circle cx="6.7" cy="6.2" r="5.8" fill="#e05a5a" stroke="#d04848" stroke-width="0.6"/><path d="M4.5 4 L8.9 8.4 M8.9 4 L4.5 8.4" stroke="#fff" stroke-width="1.7"/></svg>
<svg class="a" style="left:133px;top:294px" width="14" height="13" viewBox="0 0 14 13"><circle cx="6.5" cy="6.2" r="5.6" fill="#f6f6f6" stroke="#a8a8a8" stroke-width="0.9"/><rect x="4.6" y="3.6" width="1.2" height="5.2" fill="#888"/><rect x="7.2" y="3.6" width="1.2" height="5.2" fill="#888"/></svg>
<svg class="a" style="left:158px;top:294px" width="14" height="13" viewBox="0 0 14 13"><circle cx="6.5" cy="6.2" r="5.6" fill="#f6f6f6" stroke="#a8a8a8" stroke-width="0.9"/><path d="M5.2 3.6 L8.6 6.2 L5.2 8.8 Z" fill="#888"/></svg>
<svg class="a" style="left:971px;top:293px" width="15" height="15" viewBox="0 0 15 15"><path d="M1 14 L6 9" stroke="#7a8a9a" stroke-width="1.2"/><path d="M5 6.5 L8.5 10 L10 8 L12.5 5.5 L13.5 6 L14 5 L10 1 L9 1.5 L9.5 2.5 L7 5 Z" fill="#5a94d8" stroke="#3a74b8" stroke-width="0.6"/></svg>
<div class="a" style="left:100px;top:319px;width:362px;height:200px;background:#fff;border:1px solid #acacac"></div>
<div class="a" style="left:102px;top:321px;width:358px;height:44px;background:#6eb1ef"></div>
<svg class="a" style="left:108px;top:332px" width="24" height="24" viewBox="0 0 24 24"><defs><linearGradient id="da332" x1="0" y1="0" x2="0" y2="1"><stop offset="0" stop-color="#b4c2e4"/><stop offset="0.5" stop-color="#8a9ad0"/><stop offset="1" stop-color="#5666a8"/></linearGradient></defs>
<path d="M5 0.5 L18 0.5 L18 12 L23 12 L11.5 23.5 L0.5 12 L5 12 Z" fill="url(#da332)" stroke="#5a6aa8" stroke-width="0.6"/></svg>
<svg class="a" style="left:108px;top:376px" width="24" height="24" viewBox="0 0 24 24"><defs><linearGradient id="da376" x1="0" y1="0" x2="0" y2="1"><stop offset="0" stop-color="#b4c2e4"/><stop offset="0.5" stop-color="#8a9ad0"/><stop offset="1" stop-color="#5666a8"/></linearGradient></defs>
<path d="M5 0.5 L18 0.5 L18 12 L23 12 L11.5 23.5 L0.5 12 L5 12 Z" fill="url(#da376)" stroke="#5a6aa8" stroke-width="0.6"/></svg>
<div class="t" style="left:142.5px;top:326.36px;font-size:10.8px;line-height:10.8px;letter-spacing:-0.2px;font-weight:bold;color:#111;">S-Drive</div>
<div class="a" style="left:142px;top:341px;width:314px;height:5px;background:#5cb0cf"></div>
<div class="t" style="left:142.5px;top:352.04px;font-size:10px;line-height:10px;letter-spacing:-0.42px;font-weight:normal;color:#222;">9.55 KB in 7 jobs completed</div>
<div class="t" style="left:142.5px;top:370.36px;font-size:10.8px;line-height:10.8px;letter-spacing:-0.2px;font-weight:bold;color:#111;">S-Drive</div>
<div class="a" style="left:142px;top:386px;width:314px;height:5px;background:#5ab4d6"></div>
<div class="t" style="left:142.5px;top:396.34px;font-size:10px;line-height:10px;letter-spacing:-0.42px;font-weight:normal;color:#222;">15.66 KB in 2 jobs completed</div>
<div class="a" style="left:106px;top:409px;width:354px;height:1px;background:#e8e8e8"></div>
<div class="a" style="left:466px;top:440px;width:1px;height:21px;background:#9c9c9c"></div>
<div class="a" style="left:469px;top:440px;width:1px;height:21px;background:#b8b8b8"></div>
<div class="a" style="left:475px;top:319px;width:518px;height:200px;background:#fff;border:1px solid #acacac"></div>
<svg class="a" style="left:481px;top:326px" width="14" height="13" viewBox="0 0 14 13"><defs><radialGradient id="gl" cx="0.45" cy="0.45" r="0.55"><stop offset="0" stop-color="#3f96d0"/><stop offset="0.45" stop-color="#52a8b0"/><stop offset="0.75" stop-color="#6cbc74"/><stop offset="1" stop-color="#5aa860"/></radialGradient></defs>
<path d="M2 0.5 L10 0.5 L13.5 4 L13.5 12 L2 12 Z" fill="#fbfbfb" stroke="#cdd0d4" stroke-width="0.7"/>
<circle cx="5" cy="6" r="4.7" fill="url(#gl)"/><path d="M4 3.5 Q6 3 6.3 5 Q5.3 6.3 6.3 8.3 L5 9 Q3.5 7 4 3.5 Z" fill="#2f86d0" opacity="0.75"/><circle cx="7.6" cy="3.6" r="0.9" fill="#8ad86a"/></svg>
<div class="t" style="left:503.5px;top:326.69px;font-size:11px;line-height:11px;letter-spacing:0px;font-weight:bold;color:#111;">menu.html</div>
<div class="t" style="right:36.5px;top:328.54px;font-size:10px;line-height:10px;letter-spacing:-0.42px;color:#1e1e1e">3.30 KB completed</div>
<div class="a" style="left:481px;top:342px;width:507px;height:1px;background:#e6e6e6"></div>
<svg class="a" style="left:481px;top:349px" width="14" height="13" viewBox="0 0 14 13"><defs><radialGradient id="gl" cx="0.45" cy="0.45" r="0.55"><stop offset="0" stop-color="#3f96d0"/><stop offset="0.45" stop-color="#52a8b0"/><stop offset="0.75" stop-color="#6cbc74"/><stop offset="1" stop-color="#5aa860"/></radialGradient></defs>
<path d="M2 0.5 L10 0.5 L13.5 4 L13.5 12 L2 12 Z" fill="#fbfbfb" stroke="#cdd0d4" stroke-width="0.7"/>
<circle cx="5" cy="6" r="4.7" fill="url(#gl)"/><path d="M4 3.5 Q6 3 6.3 5 Q5.3 6.3 6.3 8.3 L5 9 Q3.5 7 4 3.5 Z" fill="#2f86d0" opacity="0.75"/><circle cx="7.6" cy="3.6" r="0.9" fill="#8ad86a"/></svg>
<div class="t" style="left:503.5px;top:348.87px;font-size:11px;line-height:11px;letter-spacing:0px;font-weight:bold;color:#111;">contact.html</div>
<div class="t" style="right:36.5px;top:350.72px;font-size:10px;line-height:10px;letter-spacing:-0.42px;color:#1e1e1e">9.55 KB completed</div>
<div class="a" style="left:481px;top:364px;width:507px;height:1px;background:#e6e6e6"></div>
<svg class="a" style="left:481px;top:371px" width="14" height="13" viewBox="0 0 14 13"><defs><radialGradient id="gl" cx="0.45" cy="0.45" r="0.55"><stop offset="0" stop-color="#3f96d0"/><stop offset="0.45" stop-color="#52a8b0"/><stop offset="0.75" stop-color="#6cbc74"/><stop offset="1" stop-color="#5aa860"/></radialGradient></defs>
<path d="M2 0.5 L10 0.5 L13.5 4 L13.5 12 L2 12 Z" fill="#fbfbfb" stroke="#cdd0d4" stroke-width="0.7"/>
<circle cx="5" cy="6" r="4.7" fill="url(#gl)"/><path d="M4 3.5 Q6 3 6.3 5 Q5.3 6.3 6.3 8.3 L5 9 Q3.5 7 4 3.5 Z" fill="#2f86d0" opacity="0.75"/><circle cx="7.6" cy="3.6" r="0.9" fill="#8ad86a"/></svg>
<div class="t" style="left:503.5px;top:371.05px;font-size:11px;line-height:11px;letter-spacing:0px;font-weight:bold;color:#111;">new.html</div>
<div class="t" style="right:36.5px;top:372.90px;font-size:10px;line-height:10px;letter-spacing:-0.42px;color:#1e1e1e">3.95 KB completed</div>
<div class="a" style="left:481px;top:387px;width:507px;height:1px;background:#e6e6e6"></div>
<svg class="a" style="left:481px;top:393px" width="14" height="13" viewBox="0 0 14 13"><defs><radialGradient id="gl" cx="0.45" cy="0.45" r="0.55"><stop offset="0" stop-color="#3f96d0"/><stop offset="0.45" stop-color="#52a8b0"/><stop offset="0.75" stop-color="#6cbc74"/><stop offset="1" stop-color="#5aa860"/></radialGradient></defs>
<path d="M2 0.5 L10 0.5 L13.5 4 L13.5 12 L2 12 Z" fill="#fbfbfb" stroke="#cdd0d4" stroke-width="0.7"/>
<circle cx="5" cy="6" r="4.7" fill="url(#gl)"/><path d="M4 3.5 Q6 3 6.3 5 Q5.3 6.3 6.3 8.3 L5 9 Q3.5 7 4 3.5 Z" fill="#2f86d0" opacity="0.75"/><circle cx="7.6" cy="3.6" r="0.9" fill="#8ad86a"/></svg>
<div class="t" style="left:503.5px;top:393.23px;font-size:11px;line-height:11px;letter-spacing:0px;font-weight:bold;color:#111;">about.html</div>
<div class="t" style="right:36.5px;top:395.07px;font-size:10px;line-height:10px;letter-spacing:-0.42px;color:#1e1e1e">9.54 KB completed</div>
<div class="a" style="left:481px;top:409px;width:507px;height:1px;background:#e6e6e6"></div>
<svg class="a" style="left:481px;top:415px" width="14" height="13" viewBox="0 0 14 13"><defs><radialGradient id="gl" cx="0.45" cy="0.45" r="0.55"><stop offset="0" stop-color="#3f96d0"/><stop offset="0.45" stop-color="#52a8b0"/><stop offset="0.75" stop-color="#6cbc74"/><stop offset="1" stop-color="#5aa860"/></radialGradient></defs>
<path d="M2 0.5 L10 0.5 L13.5 4 L13.5 12 L2 12 Z" fill="#fbfbfb" stroke="#cdd0d4" stroke-width="0.7"/>
<circle cx="5" cy="6" r="4.7" fill="url(#gl)"/><path d="M4 3.5 Q6 3 6.3 5 Q5.3 6.3 6.3 8.3 L5 9 Q3.5 7 4 3.5 Z" fill="#2f86d0" opacity="0.75"/><circle cx="7.6" cy="3.6" r="0.9" fill="#8ad86a"/></svg>
<div class="t" style="left:503.5px;top:415.41px;font-size:11px;line-height:11px;letter-spacing:0px;font-weight:bold;color:#111;">primary-navigation.html</div>
<div class="t" style="right:36.5px;top:417.26px;font-size:10px;line-height:10px;letter-spacing:-0.42px;color:#1e1e1e">3.04 KB completed</div>
<div class="a" style="left:481px;top:431px;width:507px;height:1px;background:#e6e6e6"></div>
<svg class="a" style="left:481px;top:437px" width="14" height="13" viewBox="0 0 14 13"><defs><radialGradient id="gl" cx="0.45" cy="0.45" r="0.55"><stop offset="0" stop-color="#3f96d0"/><stop offset="0.45" stop-color="#52a8b0"/><stop offset="0.75" stop-color="#6cbc74"/><stop offset="1" stop-color="#5aa860"/></radialGradient></defs>
<path d="M2 0.5 L10 0.5 L13.5 4 L13.5 12 L2 12 Z" fill="#fbfbfb" stroke="#cdd0d4" stroke-width="0.7"/>
<circle cx="5" cy="6" r="4.7" fill="url(#gl)"/><path d="M4 3.5 Q6 3 6.3 5 Q5.3 6.3 6.3 8.3 L5 9 Q3.5 7 4 3.5 Z" fill="#2f86d0" opacity="0.75"/><circle cx="7.6" cy="3.6" r="0.9" fill="#8ad86a"/></svg>
<div class="t" style="left:503.5px;top:437.59px;font-size:11px;line-height:11px;letter-spacing:0px;font-weight:bold;color:#111;">services.html</div>
<div class="t" style="right:36.5px;top:439.44px;font-size:10px;line-height:10px;letter-spacing:-0.42px;color:#1e1e1e">9.55 KB completed</div>
<div class="a" style="left:481px;top:453px;width:507px;height:1px;background:#e6e6e6"></div>
<svg class="a" style="left:481px;top:460px" width="14" height="13" viewBox="0 0 14 13"><defs><radialGradient id="gl" cx="0.45" cy="0.45" r="0.55"><stop offset="0" stop-color="#3f96d0"/><stop offset="0.45" stop-color="#52a8b0"/><stop offset="0.75" stop-color="#6cbc74"/><stop offset="1" stop-color="#5aa860"/></radialGradient></defs>
<path d="M2 0.5 L10 0.5 L13.5 4 L13.5 12 L2 12 Z" fill="#fbfbfb" stroke="#cdd0d4" stroke-width="0.7"/>
<circle cx="5" cy="6" r="4.7" fill="url(#gl)"/><path d="M4 3.5 Q6 3 6.3 5 Q5.3 6.3 6.3 8.3 L5 9 Q3.5 7 4 3.5 Z" fill="#2f86d0" opacity="0.75"/><circle cx="7.6" cy="3.6" r="0.9" fill="#8ad86a"/></svg>
<div class="t" style="left:503.5px;top:459.77px;font-size:11px;line-height:11px;letter-spacing:0px;font-weight:bold;color:#111;">mymenu1.html</div>
<div class="t" style="right:36.5px;top:461.62px;font-size:10px;line-height:10px;letter-spacing:-0.42px;color:#1e1e1e">3.09 KB completed</div>
<div class="a" style="left:481px;top:475px;width:507px;height:1px;background:#e6e6e6"></div>
<svg class="a" style="left:50px;top:296px" width="36" height="38" viewBox="0 0 36 38"><rect x="1" y="1" width="31" height="36" fill="#f8fbff" stroke="#b9cde0" stroke-width="0.8"/>
<g stroke="#bcd4ec" stroke-width="0.8"><line x1="2" y1="5" x2="31" y2="5"/><line x1="2" y1="9" x2="31" y2="9"/><line x1="2" y1="13" x2="31" y2="13"/><line x1="2" y1="17" x2="31" y2="17"/><line x1="2" y1="21" x2="31" y2="21"/><line x1="2" y1="25" x2="31" y2="25"/><line x1="2" y1="29" x2="31" y2="29"/><line x1="2" y1="33" x2="31" y2="33"/></g>
<line x1="4.5" y1="1" x2="4.5" y2="37" stroke="#e0a0a0" stroke-width="0.8"/>
<path d="M10 31 L13 25 L28 11 L33 16 L18 30 Z" fill="#f2c20a" stroke="#c09010" stroke-width="0.6"/>
<path d="M14 27 L29 13" stroke="#333" stroke-width="1.8"/>
<path d="M10 31 L13 25 L18 30 Z" fill="#e8c898"/><path d="M10 31 L11.3 28.5 L12.5 29.8 Z" fill="#222"/>
<path d="M27 10 L30 7 L35 12 L32 15 Z" fill="#b8b8b8"/>
<path d="M30 7 L32 5 Q33 4 34.5 5.5 L36 7 Q37 8.5 36 9.5 L35 12 Z" fill="#e07a8a"/></svg>
<div class="t" style="left:53px;top:340.54px;font-size:10px;line-height:10px;letter-spacing:-0.4px;font-weight:normal;color:#1e1e1e;">Editor</div>
<svg class="a" style="left:49px;top:369px" width="36" height="37" viewBox="0 0 36 37"><defs><linearGradient id="sky" x1="0" y1="0" x2="0" y2="1"><stop offset="0" stop-color="#5cc0f0"/><stop offset="1" stop-color="#c0e8f8"/></linearGradient>
<linearGradient id="grass" x1="0" y1="0" x2="0" y2="1"><stop offset="0" stop-color="#2a7e3a"/><stop offset="0.35" stop-color="#3c9a34"/><stop offset="1" stop-color="#40a828"/></linearGradient></defs>
<rect x="0.5" y="0.5" width="35" height="35" fill="#f4f4f4" stroke="#c4c4c4" stroke-width="1"/>
<rect x="2" y="2" width="32" height="32" fill="url(#sky)"/>
<ellipse cx="17" cy="8.5" rx="8" ry="1.5" fill="#eaf8fd" opacity="0.75"/><ellipse cx="28" cy="14" rx="5" ry="1.3" fill="#eaf8fd" opacity="0.7"/>
<path d="M2 18 Q12 15.5 20 17 Q28 15.5 34 16.5 L34 34 L2 34 Z" fill="url(#grass)"/>
<path d="M2 27 Q18 24 34 26 L34 34 L2 34 Z" fill="#54b83c" opacity="0.75"/>
<circle cx="10" cy="14.5" r="4.8" fill="#24962a"/><circle cx="7.5" cy="19.5" r="5" fill="#1c7a22"/><circle cx="14.5" cy="20.5" r="4.8" fill="#28a02c"/>
<rect x="7" y="23" width="2.5" height="7" fill="#7a3a1a"/><rect x="12.5" y="25" width="2.5" height="8" fill="#6a3018"/></svg>
<div class="t" style="left:50.5px;top:413.04px;font-size:10px;line-height:10px;letter-spacing:-0.4px;font-weight:normal;color:#1e1e1e;">Images</div>
<div class="a" style="left:32px;top:428px;width:68px;height:1px;background:#d8d8d8"></div>
<div class="a" style="left:32px;top:429px;width:68px;height:73px;background:linear-gradient(to right,#cfcfcf,#e6e6e6 50%,#f2f2f2);border:1px solid #b0b0b0;border-right:none"></div>
<svg class="a" style="left:45px;top:440px" width="24" height="25" viewBox="0 0 24 25"><defs><linearGradient id="ua" x1="0" y1="0" x2="0" y2="1"><stop offset="0" stop-color="#8ee06a"/><stop offset="1" stop-color="#3aa42a"/></linearGradient></defs>
<path d="M11.5 0.5 L23 12.5 L19 12.5 L19 23.5 L5 23.5 L5 12.5 L0.5 12.5 Z" fill="url(#ua)" stroke="#3a9a2a" stroke-width="0.5"/></svg>
<svg class="a" style="left:64px;top:455px" width="24" height="26" viewBox="0 0 24 26"><defs><linearGradient id="dna" x1="0" y1="0" x2="0" y2="1"><stop offset="0" stop-color="#5cc24a"/><stop offset="1" stop-color="#1e8a22"/></linearGradient></defs>
<path d="M5 0.5 L19 0.5 L19 12.5 L23 12.5 L11.8 24.8 L0.5 12.5 L5 12.5 Z" fill="url(#dna)" stroke="#2a8a2a" stroke-width="0.5"/></svg>
<div class="t" style="left:47.8px;top:483.91px;font-size:10.5px;line-height:10.5px;letter-spacing:-0.15px;font-weight:bold;color:#111;">Activity</div>
<div class="a" style="left:25px;top:510px;width:974px;height:1px;background:#d8d8d8"></div>
<div class="a" style="left:25px;top:511px;width:974px;height:1px;background:#b4b4b4"></div>
</body></html>
